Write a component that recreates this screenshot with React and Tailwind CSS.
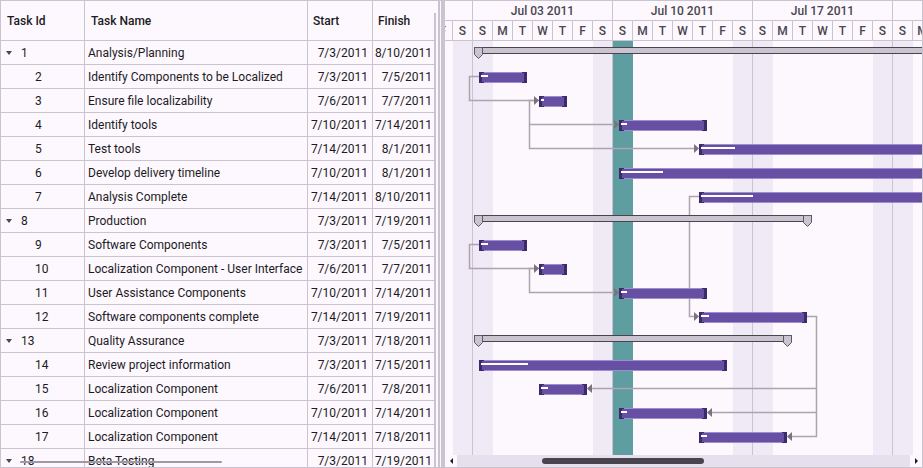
import React from 'react';

// dados das tarefas: s/e = dia (1 jul = 0), prog = largura da linha de progresso
const tasks = [
    { id: 1, name: 'Analysis/Planning', start: '7/3/2011', finish: '8/10/2011', parent: true, s: 2, e: 40 },
    { id: 2, name: 'Identify Components to be Localized', start: '7/3/2011', finish: '7/5/2011', s: 2, e: 4, prog: 7 },
    { id: 3, name: 'Ensure file localizability', start: '7/6/2011', finish: '7/7/2011', s: 5, e: 6, prog: 3 },
    { id: 4, name: 'Identify tools', start: '7/10/2011', finish: '7/14/2011', s: 9, e: 13, prog: 6 },
    { id: 5, name: 'Test tools', start: '7/14/2011', finish: '8/1/2011', s: 13, e: 31, prog: 34 },
    { id: 6, name: 'Develop delivery timeline', start: '7/10/2011', finish: '8/1/2011', s: 9, e: 31, prog: 42 },
    { id: 7, name: 'Analysis Complete', start: '7/14/2011', finish: '8/10/2011', s: 13, e: 40, prog: 52 },
    { id: 8, name: 'Production', start: '7/3/2011', finish: '7/19/2011', parent: true, s: 2, e: 18 },
    { id: 9, name: 'Software Components', start: '7/3/2011', finish: '7/5/2011', s: 2, e: 4, prog: 7 },
    { id: 10, name: 'Localization Component - User Interface', start: '7/6/2011', finish: '7/7/2011', s: 5, e: 6, prog: 3 },
    { id: 11, name: 'User Assistance Components', start: '7/10/2011', finish: '7/14/2011', s: 9, e: 13, prog: 6 },
    { id: 12, name: 'Software components complete', start: '7/14/2011', finish: '7/19/2011', s: 13, e: 18, prog: 8 },
    { id: 13, name: 'Quality Assurance', start: '7/3/2011', finish: '7/18/2011', parent: true, s: 2, e: 17 },
    { id: 14, name: 'Review project information', start: '7/3/2011', finish: '7/15/2011', s: 2, e: 14, prog: 47 },
    { id: 15, name: 'Localization Component', start: '7/6/2011', finish: '7/8/2011', s: 5, e: 7, prog: 7 },
    { id: 16, name: 'Localization Component', start: '7/10/2011', finish: '7/14/2011', s: 9, e: 13, prog: 6 },
    { id: 17, name: 'Localization Component', start: '7/14/2011', finish: '7/18/2011', s: 13, e: 17, prog: 6 },
    { id: 18, name: 'Beta Testing', start: '7/3/2011', finish: '7/19/2011', parent: true, s: 2, e: 18 },
];

const weeks = [
    { w: 40, label: '' },
    { w: 140, label: 'Jul 03 2011' },
    { w: 140, label: 'Jul 10 2011' },
    { w: 140, label: 'Jul 17 2011' },
    { w: 140, label: 'Jul 24 2011' },
];

const letters = ['F', 'S', 'S', 'M', 'T', 'W', 'T'];
const days = Array.from({ length: 26 }, (_, d) => d);

const dayClass = (d) => {
    if (d === 9) return 'bg-[#5f9ea0]';
    if (d % 7 === 1) return 'bg-[#f0eaf6] border-r border-[#cac4d0]';
    if (d % 7 === 2) return 'bg-[#f0eaf6]';
    return '';
};

// setas dos conectores (coordenadas absolutas da página)
const rightArrows = [[539, 100.5], [619, 124.5], [699, 148.5], [699, 316.5], [539, 268.5], [619, 292.5]];
const leftArrows = [[587, 388.5], [707, 412.5], [787, 436.5]];

function Bar({ task, row }) {
    const left = 20 * task.s - 6;
    const width = 20 * (task.e - task.s) + 8;
    const top = 24 * row - 17;
    return (
        <div
            className="absolute h-[11px] bg-[#6750a4] border-y border-[#9e8ed0]"
            style={{ left, top, width }}
        >
            <div className="absolute left-0 -top-px -bottom-px w-[5px] border-l-[3px] border-y border-[#3b2b6c]" />
            <div className="absolute right-0 -top-px -bottom-px w-[5px] border-r-[3px] border-y border-[#3b2b6c]" />
            <div className="absolute left-[2px] top-[2px] h-[2px] bg-white" style={{ width: task.prog }} />
        </div>
    );
}

function ParentBar({ task, row }) {
    const left = 20 * task.s - 11;
    const right = 20 * task.e + 7;
    const top = 24 * row - 18;
    return (
        <>
            <div
                className="absolute h-[7px] bg-[#c9c4cf] border border-[#49454f]"
                style={{ left, top, width: right - left }}
            />
            <svg className="absolute" width="9" height="12" style={{ left, top }}>
                <polygon points="0.5,0.5 8.5,0.5 8.5,7.5 4.5,11.5 0.5,7.5" fill="#c9c4cf" stroke="#5d5963" />
            </svg>
            <svg className="absolute" width="9" height="12" style={{ left: right - 9, top }}>
                <polygon points="0.5,0.5 8.5,0.5 8.5,7.5 4.5,11.5 0.5,7.5" fill="#c9c4cf" stroke="#5d5963" />
            </svg>
        </>
    );
}

export default function App() {
    return (
        <div className="w-[923px] h-[468px] flex overflow-hidden border border-[#cac4d0] bg-[#fdf8fd] font-['Roboto',sans-serif] text-[#1c1b1f]">
            {/* Grade à esquerda */}
            <div className="relative w-[433px] shrink-0 flex flex-col overflow-hidden">
                <div className="flex h-[40px] shrink-0 border-b border-[#cac4d0] text-[12px] font-medium">
                    <div className="w-[84px] shrink-0 border-r border-[#cac4d0] flex items-center pl-[6px]">Task Id</div>
                    <div className="w-[223px] shrink-0 border-r border-[#cac4d0] flex items-center pl-[6px]">Task Name</div>
                    <div className="w-[65px] shrink-0 border-r border-[#cac4d0] flex items-center pl-[5px]">Start</div>
                    <div className="flex-1 flex items-center pl-[5px]">Finish</div>
                </div>
                {tasks.map((t) => (
                    <div key={t.id} className="flex h-[24px] shrink-0 border-b border-[#cac4d0] text-[12px]">
                        <div className={`w-[84px] shrink-0 border-r border-[#cac4d0] flex items-center ${t.parent ? 'pl-[5px]' : 'pl-[34px]'}`}>
                            {t.parent && (
                                <span className="w-0 h-0 mr-[9px] border-x-[3px] border-x-transparent border-t-[4px] border-t-[#49454f]" />
                            )}
                            {t.id}
                        </div>
                        <div className="w-[223px] shrink-0 border-r border-[#cac4d0] flex items-center pl-[3px] whitespace-nowrap overflow-hidden">
                            {t.name}
                        </div>
                        <div className="w-[65px] shrink-0 border-r border-[#cac4d0] flex items-center justify-end pr-[4px]">
                            {t.start}
                        </div>
                        <div className="flex-1 flex items-center justify-end pr-[2px]">{t.finish}</div>
                    </div>
                ))}
                <div className="absolute left-[19px] top-[460px] w-[202px] h-[2px] rounded-full bg-[#9e99a4]" />
            </div>

            {/* Barra de rolagem vertical e divisor */}
            <div className="w-[4px] shrink-0 pt-[12px]">
                <div className="w-[2px] h-full bg-[#cac4d0]" />
            </div>
            <div className="w-[2px] shrink-0 bg-[#cac4d0]" />
            <div className="w-[1px] shrink-0" />
            <div className="w-[4px] shrink-0 bg-[#cac4d0]" />

            {/* Gráfico */}
            <div className="flex-1 flex flex-col overflow-hidden">
                <div className="flex h-[20px] shrink-0 ml-[-12px] border-b border-[#cac4d0] text-[12px] font-medium text-[#49454f]">
                    {weeks.map((w, i) => (
                        <div
                            key={i}
                            className="shrink-0 border-r border-[#cac4d0] flex items-center justify-center whitespace-nowrap"
                            style={{ width: w.w }}
                        >
                            {w.label}
                        </div>
                    ))}
                </div>
                <div className="flex h-[20px] shrink-0 ml-[-12px] border-b border-[#cac4d0] text-[12px] font-medium text-[#49454f]">
                    {days.map((d) => (
                        <div key={d} className="w-[20px] shrink-0 border-r border-[#cac4d0] flex items-center justify-center">
                            {letters[d % 7]}
                        </div>
                    ))}
                </div>

                <div className="relative flex-1 overflow-hidden">
                    <div className="flex h-full ml-[-12px]">
                        {days.map((d) => (
                            <div key={d} className={`w-[20px] shrink-0 h-full ${dayClass(d)}`} />
                        ))}
                    </div>

                    <svg className="absolute left-0 top-0" width="477" height="414" viewBox="445 41 477 414">
                        <g fill="none" stroke="#aaa5af" strokeWidth="1.5">
                            <path d="M479 76.5 H469.5 V100.5 H534" />
                            <path d="M539 100.5 H529.5 V124.5 H614" />
                            <path d="M529.5 124.5 V148.5 H694" />
                            <path d="M699 196.5 H689.5 V316.5 H694" />
                            <path d="M479 244.5 H469.5 V268.5 H534" />
                            <path d="M539 268.5 H529.5 V292.5 H614" />
                            <path d="M807 316.5 H816.5 V436.5 H792" />
                            <path d="M816.5 388.5 H592" />
                            <path d="M816.5 412.5 H712" />
                        </g>
                        <g fill="#79747e">
                            {rightArrows.map(([x, y], i) => (
                                <polygon key={i} points={`${x - 5},${y - 4.5} ${x},${y} ${x - 5},${y + 4.5}`} />
                            ))}
                            {leftArrows.map(([x, y], i) => (
                                <polygon key={i} points={`${x + 5},${y - 4.5} ${x},${y} ${x + 5},${y + 4.5}`} />
                            ))}
                        </g>
                    </svg>

                    {tasks.map((t, i) =>
                        t.parent ? (
                            <ParentBar key={t.id} task={t} row={i + 1} />
                        ) : (
                            <Bar key={t.id} task={t} row={i + 1} />
                        )
                    )}
                </div>

                <div className="h-[12px] shrink-0 flex">
                    <div className="w-[12px] flex items-center justify-center">
                        <span className="w-0 h-0 border-y-[3.5px] border-y-transparent border-r-[3px] border-r-[#1c1b1f]" />
                    </div>
                    <div className="flex-1 flex items-center bg-[#e5dfee]">
                        <div className="ml-[85px] w-[162px] h-[6px] rounded-full bg-[#49454f]" />
                    </div>
                    <div className="w-[12px] flex items-center justify-center">
                        <span className="w-0 h-0 border-y-[3.5px] border-y-transparent border-l-[3px] border-l-[#1c1b1f]" />
                    </div>
                </div>
            </div>
        </div>
    );
}
